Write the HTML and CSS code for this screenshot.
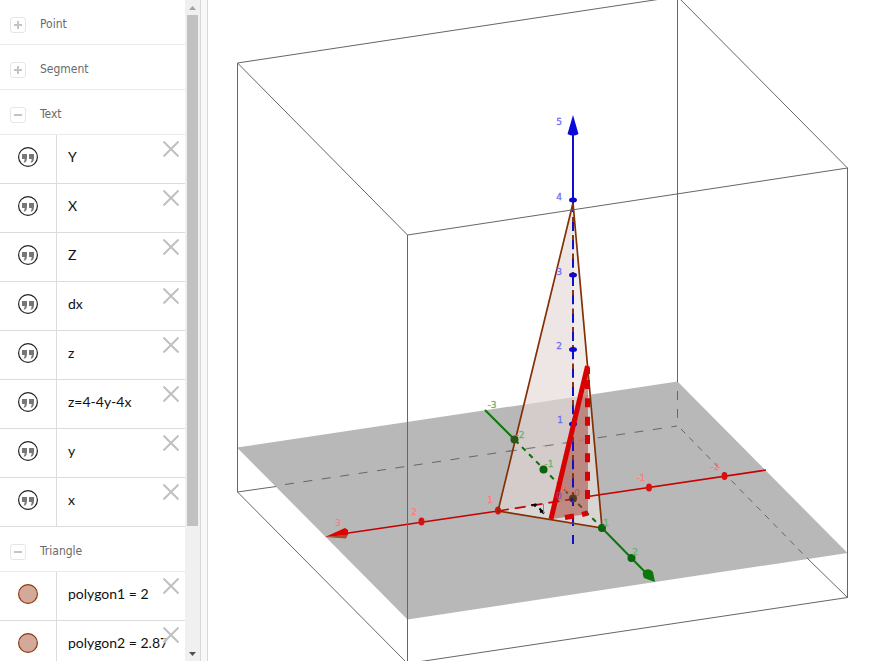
FILE: index.html
```html
<!DOCTYPE html>
<html lang="en">
<head>
    <meta charset="UTF-8">
    <meta name="viewport" content="width=device-width, initial-scale=1.0">
    <title>3D Calculator</title>
    <link rel="stylesheet" href="styles.css">
</head>
<body>
    <svg width="0" height="0" class="defs">
        <symbol id="quote" viewBox="0 0 20 20">
            <circle cx="10" cy="10" r="9.4" fill="#fff" stroke="#222" stroke-width="1.2"/>
            <path d="M4 7h5v4q0 3-2 4.500h-1.500q1.200-1.500 1.200-3.500h-2.700zM11 7h5v4q0 3-2 4.500h-1.500q1.200-1.500 1.200-3.500h-2.700z" fill="#777"/>
        </symbol>
        <symbol id="disc" viewBox="0 0 20 20">
            <circle cx="10" cy="10" r="9.4" fill="#d3aa99" stroke="#8f3a12" stroke-width="1.2"/>
        </symbol>
        <symbol id="cross" viewBox="0 0 16 16">
            <path d="M0.500 0.500L15.500 15.500M15.500 0.500L0.500 15.500" stroke="#c0c0c0" stroke-width="2"/>
        </symbol>
        <symbol id="plus" viewBox="0 0 14 14">
            <path d="M3 7h8M7 3v8" stroke="#c4c4c4" stroke-width="2"/>
        </symbol>
        <symbol id="minus" viewBox="0 0 14 14">
            <path d="M3 7h8" stroke="#c4c4c4" stroke-width="2"/>
        </symbol>
    </svg>

    <div class="app">
        <aside class="algebra">
            <div class="list">
                <div class="group"><button class="toggle" aria-label="Expand Point"><svg><use href="#plus"/></svg></button><span>Point</span></div>
                <div class="group"><button class="toggle" aria-label="Expand Segment"><svg><use href="#plus"/></svg></button><span>Segment</span></div>
                <div class="group"><button class="toggle" aria-label="Collapse Text"><svg><use href="#minus"/></svg></button><span>Text</span></div>
                <div class="row"><button class="marble" aria-label="Show Y"><svg><use href="#quote"/></svg></button><span class="value">Y</span><button class="remove" aria-label="Delete Y"><svg><use href="#cross"/></svg></button></div>
                <div class="row"><button class="marble" aria-label="Show X"><svg><use href="#quote"/></svg></button><span class="value">X</span><button class="remove" aria-label="Delete X"><svg><use href="#cross"/></svg></button></div>
                <div class="row"><button class="marble" aria-label="Show Z"><svg><use href="#quote"/></svg></button><span class="value">Z</span><button class="remove" aria-label="Delete Z"><svg><use href="#cross"/></svg></button></div>
                <div class="row"><button class="marble" aria-label="Show dx"><svg><use href="#quote"/></svg></button><span class="value">dx</span><button class="remove" aria-label="Delete dx"><svg><use href="#cross"/></svg></button></div>
                <div class="row"><button class="marble" aria-label="Show z"><svg><use href="#quote"/></svg></button><span class="value">z</span><button class="remove" aria-label="Delete z"><svg><use href="#cross"/></svg></button></div>
                <div class="row"><button class="marble" aria-label="Show plane"><svg><use href="#quote"/></svg></button><span class="value">z=4-4y-4x</span><button class="remove" aria-label="Delete plane"><svg><use href="#cross"/></svg></button></div>
                <div class="row"><button class="marble" aria-label="Show y"><svg><use href="#quote"/></svg></button><span class="value">y</span><button class="remove" aria-label="Delete y"><svg><use href="#cross"/></svg></button></div>
                <div class="row"><button class="marble" aria-label="Show x"><svg><use href="#quote"/></svg></button><span class="value">x</span><button class="remove" aria-label="Delete x"><svg><use href="#cross"/></svg></button></div>
                <div class="group"><button class="toggle" aria-label="Collapse Triangle"><svg><use href="#minus"/></svg></button><span>Triangle</span></div>
                <div class="row"><button class="marble" aria-label="Show polygon1"><svg><use href="#disc"/></svg></button><span class="value">polygon1 = 2</span><button class="remove" aria-label="Delete polygon1"><svg><use href="#cross"/></svg></button></div>
                <div class="row"><button class="marble" aria-label="Show polygon2"><svg><use href="#disc"/></svg></button><span class="value">polygon2 = 2.87</span><button class="remove" aria-label="Delete polygon2"><svg><use href="#cross"/></svg></button></div>
            </div>
            <div class="scrollbar">
                <button class="arrow" aria-label="Scroll up"><svg viewBox="0 0 15 15"><path d="M4 10L7.500 6L11 10z" fill="#a3a3a3"/></svg></button>
                <div class="track"><div class="thumb"></div></div>
                <button class="arrow" aria-label="Scroll down"><svg viewBox="0 0 15 15"><path d="M4 6L7.500 10L11 6z" fill="#505050"/></svg></button>
            </div>
        </aside>
        <div class="splitter"></div>

        <main class="view">
            <svg viewBox="208 0 671 661" preserveAspectRatio="xMinYMin meet" role="img" aria-label="3D graphics view">
                <!-- xOy plane -->
                <path d="M237 447.500L677.500 381.500L847.500 553L407.500 619.500z" fill="#b8b8b8"/>

                <!-- clipping box, back edges -->
                <g class="box">
                    <path d="M237.500 492L276 486.500M808 559L847.500 597.500M677.500 0V382"/>
                    <path d="M285 484.500L677 426" stroke-dasharray="9 9.600"/>
                    <path d="M677.500 391V426" stroke-dasharray="9 9"/>
                    <path d="M681 429L808 559" stroke-dasharray="6 6"/>
                </g>

                <!-- y axis -->
                <g class="y-axis">
                    <path d="M485 410L515 440M602 528L648 575"/>
                    <path d="M515 440L602 528" stroke-dasharray="5 5"/>
                </g>

                <!-- tetrahedron faces -->
                <path d="M498 511L573 499L602 528z" fill="#dad8d7"/>
                <path d="M498 511L573 202V499z" fill="#e2d7d4" fill-opacity=".63"/>
                <path d="M573 202L602 528L573 499z" fill="#e8e4e1" fill-opacity=".66"/>
                <path d="M515 440L602 528" stroke="#107010" stroke-width="2" stroke-dasharray="5 5" fill="none"/>
                <path d="M508 451.500L572 442" stroke="#777" stroke-dasharray="9 9.600"/>

                <!-- section triangle -->
                <path d="M588 366L551 519L588 514z" fill="#a03c32" fill-opacity=".5"/>

                <!-- x axis -->
                <g class="x-axis">
                    <path d="M345 533.500L498 511M588 496.500L766 470"/>
                    <path d="M498 511L573 499" stroke-dasharray="11 6"/>
                    <path d="M325 537L345 528L348 530V535z" fill="#e00000" stroke="none"/>
                    <path d="M325 537L348 534.500L346 538.500z" fill="#a64a35" stroke="none"/>
                    <g fill="#d81010" stroke="none">
                        <ellipse cx="421.500" cy="521.500" rx="3" ry="4"/>
                        <ellipse cx="498" cy="510.500" rx="3" ry="4"/>
                        <ellipse cx="649" cy="487.500" rx="3" ry="4"/>
                        <ellipse cx="724.500" cy="476" rx="3" ry="4"/>
                    </g>
                </g>

                <!-- z axis -->
                <g class="z-axis">
                    <path d="M573 134V212"/>
                    <path d="M573 217V510" stroke-dasharray="14 4.330"/>
                    <path d="M573 517V526M573 535V544"/>
                    <path d="M573 217V510" stroke="#8a3510" stroke-dasharray="5 13.330"/>
                    <path d="M573 115L578.500 134Q573 137 567.500 134z" fill="#0a0ad8" stroke="none"/>
                    <g fill="#0a0ad0" stroke="none">
                        <ellipse cx="573" cy="200" rx="4" ry="2.500"/>
                        <ellipse cx="573" cy="275" rx="4" ry="2.500"/>
                        <ellipse cx="573" cy="349.500" rx="4" ry="2.500"/>
                        <ellipse cx="573" cy="424" rx="4" ry="2.500"/>
                    </g>
                </g>
                <circle cx="573" cy="498.500" r="4" fill="#5a3a18"/>
                <circle cx="572" cy="499.500" r="1.500" fill="#1414b0"/>

                <!-- tetrahedron edges -->
                <path d="M573 203L498 511L602 528L573 203" fill="none" stroke="#852f05" stroke-width="1.700"/>
                <path d="M587.500 380V500" stroke="#d80000" stroke-width="5" stroke-dasharray="9 9.330"/>
                <path d="M587.500 368V374M565 517.500L574 516M582 514.500L588 513" stroke="#d80000" stroke-width="5"/>
                <path d="M587.500 366L551 519" stroke="#d80000" stroke-width="5"/>

                <g fill="#0a640a">
                    <circle cx="514.500" cy="439.500" r="4" fill="#2d5515"/>
                    <circle cx="543.500" cy="469.500" r="4"/>
                    <circle cx="602" cy="528" r="4"/>
                    <circle cx="631.500" cy="558" r="4"/>
                    <path d="M655 582L644 578Q641 572 645 570Q650 568 653 572z" fill="#0c780c"/>
                </g>

                <!-- clipping box, front edges -->
                <path class="box" d="M677.500 -3.500L237.500 63L407.500 235L847.500 168L677.500 -3.500M237.500 63V492L407.500 663.500L847.500 597.500V168M407.500 235V661"/>

                <path d="M531 505L537 504.500M535 503.500V507" stroke="#000" stroke-width="1.500"/>
                <path d="M539.500 508.500L544 513.500M540 512L544 511" stroke="#000" stroke-width="2"/>
                <path d="M543.500 504V513" stroke="#888"/>

                <g class="ticks">
                    <g fill="#7070f0" stroke="#7070f0">
                        <text x="559" y="125">5</text>
                        <text x="559" y="200">4</text>
                        <text x="559" y="275">3</text>
                        <text x="559" y="349">2</text>
                        <text x="560" y="423">1</text>
                    </g>
                    <g fill="#ff7c7c" stroke="#ff7c7c">
                        <text x="338" y="526">3</text>
                        <text x="414" y="515">2</text>
                        <text x="490" y="503">1</text>
                        <text x="641" y="481">-1</text>
                        <text x="715" y="470">-2</text>
                        <text x="564" y="492" fill="#e05050">0</text>
                    </g>
                    <g fill="#70b070" stroke="#70b070">
                        <text x="492" y="408">-3</text>
                        <text x="520" y="438">-2</text>
                        <text x="549" y="467">-1</text>
                        <text x="606" y="526">1</text>
                        <text x="635" y="555">2</text>
                    </g>
                    <text x="559" y="499" fill="#8050a0">0</text>
                    <text x="577" y="496" fill="#a06850">0</text>
                </g>
            </svg>
        </main>
    </div>
</body>
</html>
```

FILE: styles.css
```css
* { box-sizing: border-box; }
body {
    margin: 0;
    background: #fff;
    font-family: "DejaVu Sans Condensed", "DejaVu Sans", sans-serif;
    font-size: 12px;
}
button { padding: 0; border: none; background: none; cursor: pointer; }
button svg { display: block; width: 100%; height: 100%; }
.defs { position: absolute; }

.app { display: flex; height: 100vh; padding-bottom: 2px; }

/* Algebra list */
.algebra { display: flex; flex: 0 0 200px; min-width: 0; }
.list { flex: 1; min-width: 0; overflow: hidden; }
.group {
    display: flex;
    align-items: flex-start;
    gap: 14px;
    height: 45px;
    padding: 17px 0 0 10px;
    border-bottom: 1px solid #ebebeb;
    color: #6a6a6a;
    line-height: 14px;
}
.toggle {
    width: 16px;
    height: 16px;
    border: 1px solid #e6e6e6;
    border-radius: 3px;
}
.row {
    display: flex;
    align-items: stretch;
    height: 49px;
    border-bottom: 1px solid #dcdcdc;
}
.marble {
    flex: 0 0 57px;
    padding: 12px 18px 16px;
    border-right: 1px solid #dcdcdc;
}
.marble svg { width: 20px; height: 20px; }
.value {
    flex: 1;
    min-width: 0;
    padding: 12px 0 0 11px;
    color: #111;
    font-family: Lato, "Open Sans", sans-serif;
    font-size: 14px;
    line-height: 20px;
    white-space: nowrap;
}
.remove {
    width: 16px;
    height: 16px;
    margin: 6px 6px 0 0;
}
.remove svg { background: rgba(255, 255, 255, 0.6); }

/* Scrollbar */
.scrollbar {
    display: flex;
    flex-direction: column;
    width: 15px;
    background: #f0f0f0;
}
.arrow { height: 15px; }
.track { flex: 1; padding: 0 2px; }
.thumb { height: 81%; background: #c1c1c1; }

.splitter {
    flex: 0 0 8px;
    background: #f8f8f8;
    border: 1px solid #d8d8d8;
    border-width: 0 1px;
}

/* 3D view */
.view { flex: 1; min-width: 0; }
.view > svg { display: block; width: 100%; height: 100%; }
.box { fill: none; stroke: #666; stroke-width: 1; }
.x-axis { stroke: #c80000; stroke-width: 1.7; }
.y-axis { stroke: #0a780a; stroke-width: 2; }
.z-axis { stroke: #1010c8; stroke-width: 2; }
.ticks {
    font-family: "DejaVu Sans", sans-serif;
    font-size: 9px;
    text-anchor: middle;
    stroke-width: 0.3;
}
```
